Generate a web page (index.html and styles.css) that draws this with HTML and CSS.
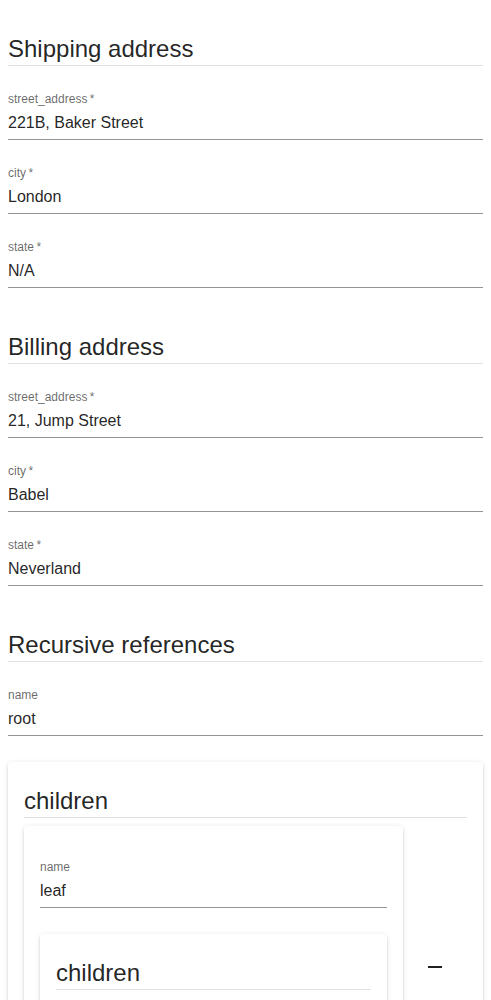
FILE: index.html
```html
<!DOCTYPE html>
<html lang="en">
<head>
<meta charset="utf-8">
<title>Form</title>
<link rel="stylesheet" href="styles.css">
</head>
<body>
<form class="form">
  <section class="group">
    <div class="title"><h5>Shipping address</h5><hr class="divider"></div>
    <div class="field"><label class="label">street_address<span class="ast">&thinsp;*</span></label><div class="input">221B, Baker Street</div></div>
    <div class="field"><label class="label">city<span class="ast">&thinsp;*</span></label><div class="input">London</div></div>
    <div class="field"><label class="label">state<span class="ast">&thinsp;*</span></label><div class="input">N/A</div></div>
  </section>
  <section class="group">
    <div class="title"><h5>Billing address</h5><hr class="divider"></div>
    <div class="field"><label class="label">street_address<span class="ast">&thinsp;*</span></label><div class="input">21, Jump Street</div></div>
    <div class="field"><label class="label">city<span class="ast">&thinsp;*</span></label><div class="input">Babel</div></div>
    <div class="field"><label class="label">state<span class="ast">&thinsp;*</span></label><div class="input">Neverland</div></div>
  </section>
  <section class="group">
    <div class="title"><h5>Recursive references</h5><hr class="divider"></div>
    <div class="field"><label class="label">name</label><div class="input">root</div></div>
    <div class="paper array">
      <div class="title inner"><h5>children</h5><hr class="divider"></div>
      <div class="item-row">
        <div class="item-main">
          <div class="paper item">
            <div class="field first"><label class="label">name</label><div class="input">leaf</div></div>
            <div class="paper array nested">
              <div class="title inner"><h5>children</h5><hr class="divider"></div>
              <div class="add-row">
                <button type="button" class="icon-btn add" aria-label="Add">
                  <svg viewBox="0 0 24 24" width="24" height="24"><path d="M19 13h-6v6h-2v-6H5v-2h6V5h2v6h6v2z"/></svg>
                </button>
              </div>
            </div>
          </div>
        </div>
        <div class="item-tools">
          <button type="button" class="icon-btn remove" aria-label="Remove">
            <svg viewBox="0 0 24 24" width="24" height="24"><path d="M19 13H5v-2h14v2z"/></svg>
          </button>
        </div>
      </div>
    </div>
  </section>
</form>
</body>
</html>
```

FILE: styles.css
```css
* { box-sizing: border-box; }
html, body { background: #fff; }
body {
  margin: 0;
  padding: 25px 8px 40px;
  font-family: "Liberation Sans", Arial, Helvetica, sans-serif;
  color: rgba(0,0,0,0.87);
}
.form { display: flex; flex-direction: column; }
.group { display: flex; flex-direction: column; }
.group + .group { margin-top: 35px; }
.title { display: flex; flex-direction: column; margin-top: 8px; }
.title h5 {
  margin: 0;
  font-size: 24px;
  font-weight: 400;
  line-height: 32px;
  height: 32px;
}
.divider {
  margin: 0;
  border: 0;
  height: 1px;
  background: rgba(0,0,0,0.12);
}
.field {
  display: flex;
  flex-direction: column;
  margin-top: 26px;
  height: 48px;
}
.label {
  font-size: 12px;
  line-height: 14px;
  height: 16px;
  color: rgba(0,0,0,0.6);
}
.input {
  font-size: 16px;
  line-height: 23px;
  padding: 3px 0 5px;
  height: 32px;
  border-bottom: 1px solid rgba(0,0,0,0.42);
}
.paper {
  background: #fff;
  border-radius: 4px;
  box-shadow: 0px 3px 1px -2px rgba(0,0,0,0.2), 0px 2px 2px 0px rgba(0,0,0,0.14), 0px 1px 5px 0px rgba(0,0,0,0.12);
  padding: 16px;
}
.array { margin-top: 26px; display: flex; flex-direction: column; }
.title.inner { margin-top: 7px; margin-bottom: 8px; }
.item-row { display: flex; align-items: center; }
.item-main { flex: 1; min-width: 0; padding-bottom: 16px; }
.item-tools { width: 64px; display: flex; justify-content: center; }
.icon-btn {
  border: 0;
  background: transparent;
  padding: 0;
  width: 48px;
  height: 48px;
  display: flex;
  align-items: center;
  justify-content: center;
  fill: rgba(0,0,0,0.87);
  cursor: pointer;
}
.add-row { display: flex; justify-content: flex-end; padding-top: 14px; }
.add-row .icon-btn { width: 64px; height: 48px; }
.item { display: flex; flex-direction: column; }
.item > .field.first { margin-top: 18px; }
```
